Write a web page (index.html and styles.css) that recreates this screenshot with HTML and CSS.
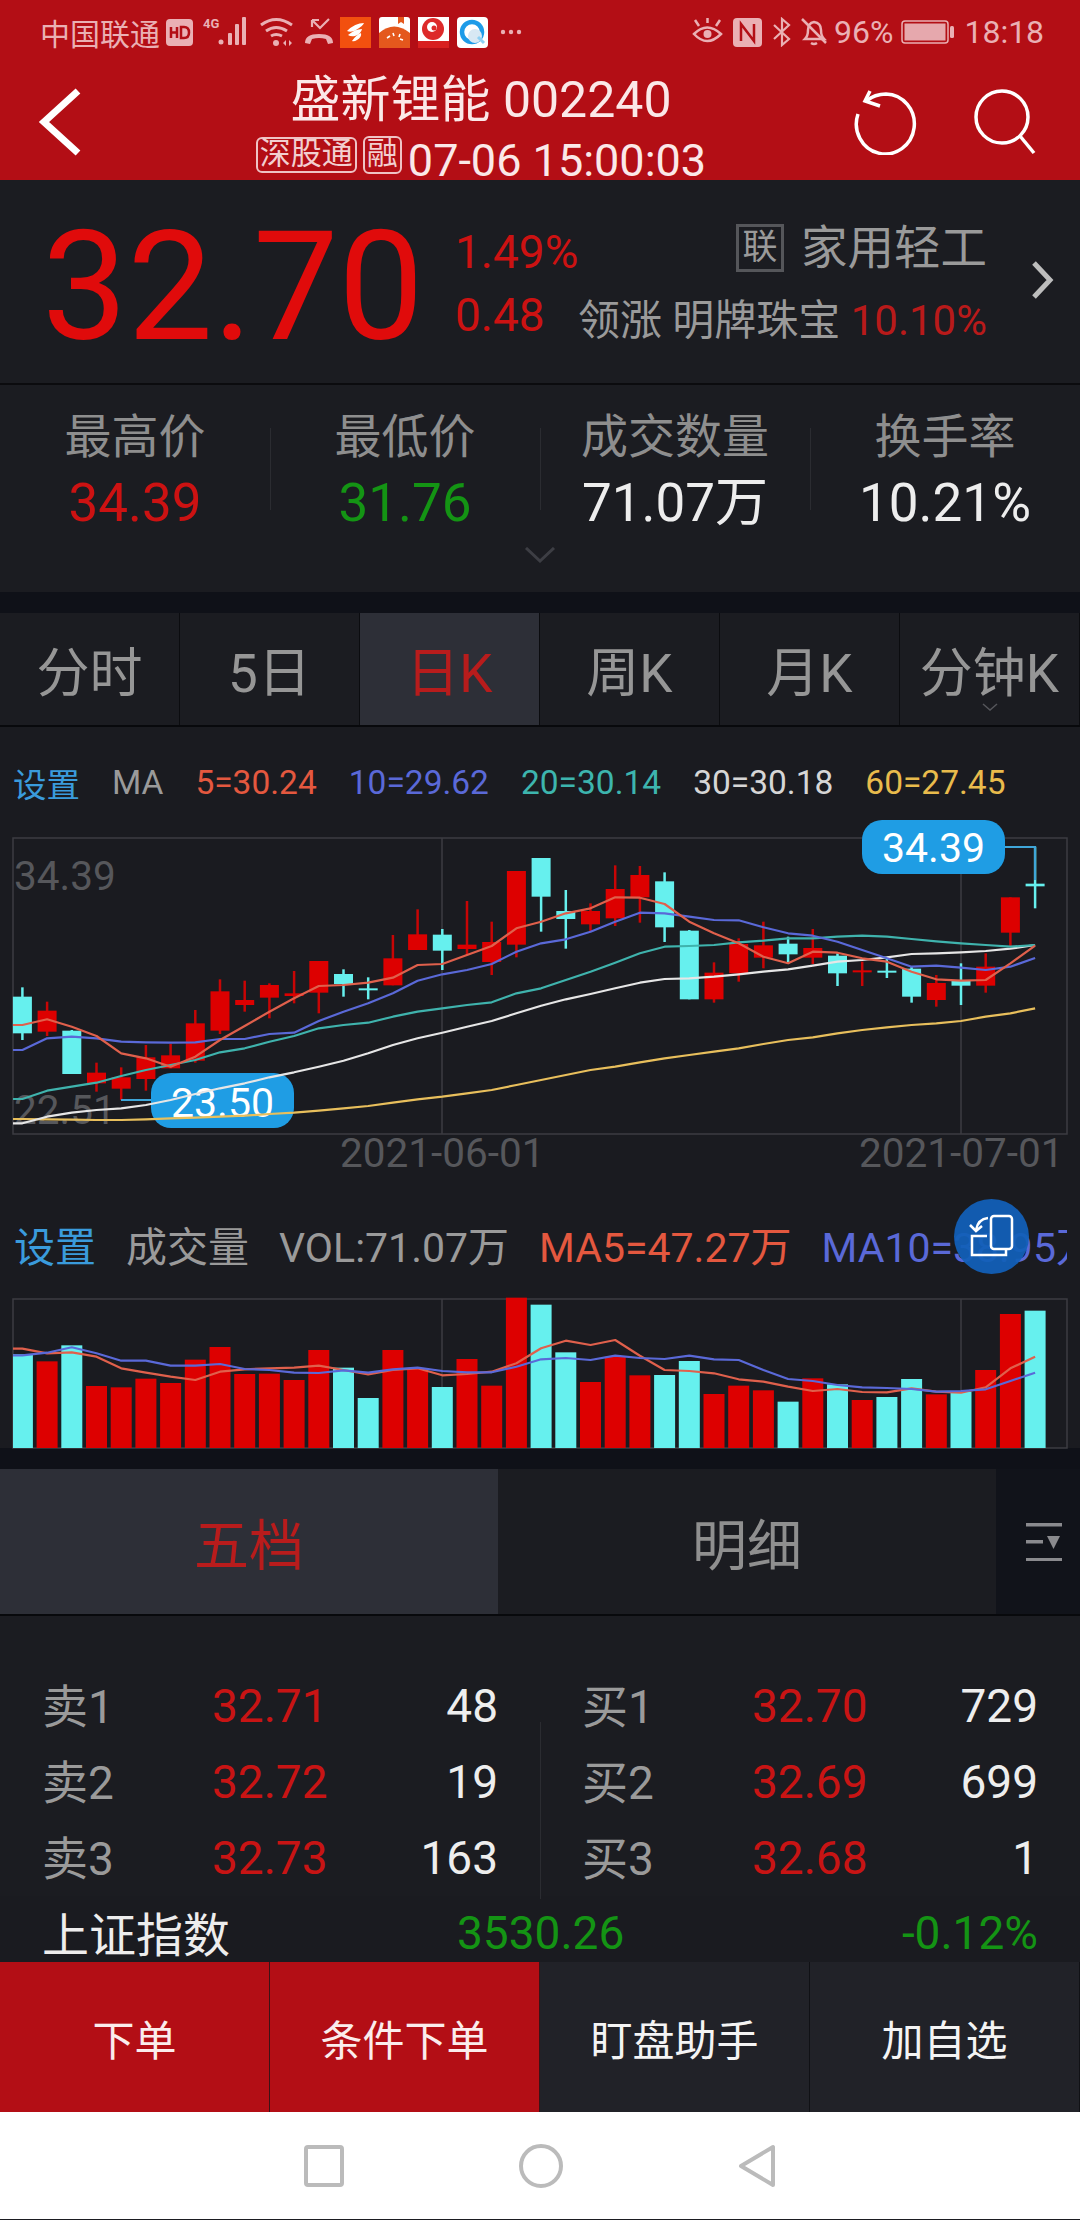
FILE: index.html
```html
<!DOCTYPE html>
<html lang="zh-CN">
<head>
  <meta charset="UTF-8" />
  <meta name="viewport" content="width=device-width, initial-scale=1.0" />
  <title>盛新锂能 002240</title>
  <link rel="stylesheet" href="styles.css">
</head>
<body>
  <header class="topbar">
    <div class="status">
      <span class="carrier">中国联通</span>
      <svg class="ico-hd" width="27" height="27" viewBox="0 0 27 27"><rect width="27" height="27" rx="4" fill="#eab0b4"/><path d="M5 8v11M5 13.500h6M11 8v11M15 8v11h3q5 0 5-5.500T18 8z" fill="none" stroke="#b30e15" stroke-width="2.500"/></svg>
      <svg class="ico-signal" width="50" height="30" viewBox="0 0 50 30"><text x="0" y="12" class="tiny">4G</text><g fill="#eab0b4"><circle cx="18" cy="26" r="2.500"/><rect x="25" y="17" width="4" height="12" rx="1"/><rect x="32" y="8" width="4" height="21" rx="1"/><rect x="39" y="1" width="4" height="28" rx="1"/></g></svg>
      <svg class="ico-wifi" width="36" height="30" viewBox="0 0 36 30"><g fill="none" stroke="#eab0b4" stroke-width="3"><path d="M2 8q15-11 31 0"/><path d="M7 14q10-7 21 0"/><path d="M12 19q5-3 11 0"/></g><circle cx="17" cy="26" r="3" fill="#eab0b4"/><path d="M24 26l3-3v6zM33 26l-3-3v6z" fill="#eab0b4"/></svg>
      <svg class="ico-missed" width="30" height="30" viewBox="0 0 30 30"><path d="M8 3l8 8 9-9M8 3h7M8 3v7" fill="none" stroke="#eab0b4" stroke-width="2.200"/><path d="M1 26q0-9 14-9t14 9l-5 1-2-5q-7-2-14 0l-2 5z" fill="#eab0b4"/></svg>
      <div class="apps">
        <svg width="31" height="31" viewBox="0 0 31 31"><rect width="31" height="31" fill="#f2500f"/><path d="M7 14q8-8 17-8-1 3-8 7-5 3-9 1zM8 18q7-6 14-6-1 5-7 7-4 1-7-1zM12 24q4-6 9-8 1 4-4 7-3 2-5 1z" fill="#fff"/></svg>
        <svg width="31" height="31" viewBox="0 0 31 31"><rect width="31" height="31" rx="3" fill="#fff"/><path d="M0 16q15-13 31 0v15H0z" fill="#e4581d"/><path d="M19 0h6v7l-3-2-3 2z" fill="#e4581d"/><path d="M8 21l3-2M14 16l1 3M21 17l-1 3M24 23l-3-1" stroke="#fff" stroke-width="1.600"/></svg>
        <svg width="31" height="31" viewBox="0 0 31 31"><rect width="31" height="31" fill="#fff"/><circle cx="15" cy="12" r="11" fill="#dd2a2a"/><circle cx="14" cy="10" r="5" fill="#fff"/><circle cx="16" cy="11" r="2.500" fill="#dd2a2a"/><rect y="24" width="31" height="7" fill="#d81f1f"/></svg>
        <svg width="31" height="31" viewBox="0 0 31 31"><rect width="31" height="31" rx="4" fill="#fff"/><circle cx="15" cy="15" r="10" fill="none" stroke="#1e9be8" stroke-width="4.500"/><circle cx="18" cy="19" r="7" fill="#d8e8f4"/><path d="M21 20l6 6" stroke="#8ed0f4" stroke-width="3"/></svg>
      </div>
      <svg class="ico-dots" width="22" height="6" viewBox="0 0 22 6"><g fill="#eab0b4"><circle cx="3" cy="3" r="2.200"/><circle cx="11" cy="3" r="2.200"/><circle cx="19" cy="3" r="2.200"/></g></svg>

      <svg class="ico-eye" width="31" height="28" viewBox="0 0 31 28"><g fill="none" stroke="#eab0b4" stroke-width="2.500"><path d="M2 16q13-13 27 0-14 14-27 0z"/><path d="M3 2l4 6M28 2l-4 6M15.500 0v5"/></g><circle cx="15.500" cy="16" r="4" fill="#eab0b4"/></svg>
      <svg class="ico-nfc" width="29" height="29" viewBox="0 0 29 29"><rect width="29" height="29" rx="4" fill="#eab0b4"/><path d="M8 23V6l13 17V6" fill="none" stroke="#b30e15" stroke-width="2.500"/></svg>
      <svg class="ico-bt" width="20" height="30" viewBox="0 0 20 30"><path d="M2 8l15 14-7 6V2l7 6L2 22" fill="none" stroke="#eab0b4" stroke-width="2.200"/></svg>
      <svg class="ico-bell" width="26" height="30" viewBox="0 0 26 30"><path d="M4 22q3-3 3-9 0-7 6-8 7 1 7 8 0 6 3 9zM10 26q3 2 6 0" fill="none" stroke="#eab0b4" stroke-width="2.500"/><path d="M1 2l24 24" stroke="#eab0b4" stroke-width="2.500"/></svg>
      <span class="batt-pct">96%</span>
      <svg class="ico-batt" width="53" height="24" viewBox="0 0 53 24"><rect x="1" y="1" width="46" height="22" rx="3" fill="none" stroke="#eab0b4" stroke-width="1.500"/><rect x="3.500" y="3.500" width="41" height="17" fill="#e6a8ad"/><rect x="49" y="6" width="4" height="12" rx="1.500" fill="#eab0b4"/></svg>
      <span class="clock">18:18</span>
    </div>
    <div class="nav">
      <svg class="back" width="46" height="72" viewBox="0 0 46 72"><path d="M40 5L6 36l34 31" fill="none" stroke="#fff" stroke-width="7"/></svg>
      <div class="title-box">
        <div class="title">盛新锂能 002240</div>
        <div class="subtitle">
          <span class="tag">深股通</span><span class="tag tag-tall">融</span><span class="time">07-06 15:00:03</span>
        </div>
      </div>
      <div class="actions">
        <svg width="64" height="66" viewBox="854 88 64 66"><path d="M866 100q9-7 20-7a29 30 0 1 1-28 20" fill="none" stroke="#fff" stroke-width="3.500"/><path d="M870 90l-5 10 15 5" fill="none" stroke="#fff" stroke-width="3.500"/></svg>
        <svg width="66" height="66" viewBox="971 88 66 66"><circle cx="1002" cy="116" r="26" fill="none" stroke="#fff" stroke-width="3.500"/><path d="M1020 135l14 17" stroke="#fff" stroke-width="3.500"/></svg>
      </div>
    </div>
  </header>

  <section class="quote">
    <div class="price">32.70</div>
    <div class="change">
      <div>1.49%</div>
      <div>0.48</div>
    </div>
    <div class="sector">
      <div class="sector-name"><span class="lian">联</span>家用轻工</div>
      <div class="sector-lead">领涨 明牌珠宝 <em>10.10%</em></div>
    </div>
    <svg class="more" width="26" height="40" viewBox="0 0 26 40"><path d="M5 3l16 17L5 37" fill="none" stroke="#bdbdbd" stroke-width="5"/></svg>
  </section>

  <section class="stats">
    <div class="stat-grid">
      <div class="stat"><span>最高价</span><b class="red">34.39</b></div>
      <div class="stat"><span>最低价</span><b class="green">31.76</b></div>
      <div class="stat"><span>成交数量</span><b>71.07万</b></div>
      <div class="stat"><span>换手率</span><b>10.21%</b></div>
    </div>
    <svg class="fold" width="32" height="16" viewBox="0 0 32 16"><path d="M2 1l14 13L30 1" fill="none" stroke="#3d3e44" stroke-width="3"/></svg>
  </section>

  <div class="band"></div>

  <nav class="tabs">
    <a>分时</a>
    <a>5日</a>
    <a class="on">日K</a>
    <a>周K</a>
    <a>月K</a>
    <a class="min">分钟K<svg width="16" height="8" viewBox="0 0 16 8"><path d="M1 1l7 6 7-6" fill="none" stroke="#55565b" stroke-width="1.500"/></svg></a>
  </nav>

  <section class="charts">
    <div class="ma-row">
      <span class="blue-link">设置</span>
      <span class="grey">MA</span>
      <span class="c5">5=30.24</span>
      <span class="c10">10=29.62</span>
      <span class="c20">20=30.14</span>
      <span class="c30">30=30.18</span>
      <span class="c60">60=27.45</span>
    </div>

    <svg class="kchart" width="1080" height="337" viewBox="0 838 1080 337">
      <rect class="frame" x="13" y="838" width="1054" height="296"/>
      <path class="grid" d="M442 838V1134M961 838V1134"/>
      <text class="axis" x="14" y="890">34.39</text>
      <text class="axis" x="14" y="1124">22.51</text>
      <text class="axis" x="340" y="1167">2021-06-01</text>
      <text class="axis" x="859" y="1167">2021-07-01</text>
      <g id="kBars"></g>
      <path class="leader" d="M121 1100H151"/>
      <rect class="bubble" x="151" y="1073" width="143" height="55" rx="20"/>
      <text class="bubble-text" x="222.500" y="1117">23.50</text>
      <g id="kLines"></g>
      <path class="leader" d="M1005 847H1035V880"/>
      <rect class="bubble" x="862" y="820" width="143" height="54" rx="20"/>
      <text class="bubble-text" x="933.500" y="862">34.39</text>
    </svg>

    <div class="vol-row">
      <span class="blue-link">设置</span>
      <span class="grey">成交量</span>
      <span class="grey">VOL:71.07万</span>
      <span class="c5">MA5=47.27万</span>
      <span class="c10">MA10=38.95万</span>
      <div class="rotate-btn">
        <svg width="75" height="75" viewBox="0 0 75 75"><g fill="none" stroke="#fff" stroke-width="2.500"><rect x="37" y="17" width="21" height="33" rx="3"/><path d="M33 37H18V56H52V51"/><path d="M34 19q-10 1-12 12"/><path d="M16 26l6 6 6-5"/></g></svg>
      </div>
    </div>

    <svg class="vchart" width="1080" height="149" viewBox="0 1299 1080 149">
      <rect class="frame" x="13" y="1299" width="1054" height="149"/>
      <path class="grid" d="M442 1299V1448M961 1299V1448"/>
      <g id="vBars"></g>
      <g id="vLines"></g>
    </svg>
  </section>

  <div class="band"></div>

  <nav class="book-tabs">
    <a class="on">五档</a>
    <a>明细</a>
    <div class="book-menu">
      <svg width="36" height="38" viewBox="0 0 36 38"><g fill="#8a8a8e"><rect y="0" width="36" height="3.500"/><rect y="17" width="17" height="3.500"/><rect y="35" width="36" height="3.500"/><path d="M21 13h13l-6.500 13z"/></g></svg>
    </div>
  </nav>

  <section class="depth">
    <div class="book">
      <div class="book-row"><span>卖1</span><span class="red">32.71</span><span class="qty">48</span></div>
      <div class="book-row"><span>卖2</span><span class="red">32.72</span><span class="qty">19</span></div>
      <div class="book-row"><span>卖3</span><span class="red">32.73</span><span class="qty">163</span></div>
    </div>
    <div class="book">
      <div class="book-row"><span>买1</span><span class="red">32.70</span><span class="qty">729</span></div>
      <div class="book-row"><span>买2</span><span class="red">32.69</span><span class="qty">699</span></div>
      <div class="book-row"><span>买3</span><span class="red">32.68</span><span class="qty">1</span></div>
    </div>
  </section>
  <div class="index-row">
    <span class="index-name">上证指数</span>
    <span class="green index-val">3530.26</span>
    <span class="green index-pct">-0.12%</span>
  </div>

  <div class="actions-bar">
    <a class="primary">下单</a>
    <a class="primary">条件下单</a>
    <a>盯盘助手</a>
    <a>加自选</a>
  </div>

  <footer class="sysnav">
    <svg width="40" height="42" viewBox="0 0 40 42"><rect x="2" y="2" width="36" height="38" rx="2" fill="none" stroke="#bbb" stroke-width="4"/></svg>
    <svg width="44" height="44" viewBox="0 0 44 44"><circle cx="22" cy="22" r="20" fill="none" stroke="#bbb" stroke-width="4"/></svg>
    <svg width="38" height="44" viewBox="0 0 38 44"><path d="M35 3v38L3 22z" fill="none" stroke="#bbb" stroke-width="4" stroke-linejoin="round"/></svg>
  </footer>

  <script src="chart.js"></script>
</body>
</html>
```

FILE: styles.css
```css
* {
  margin: 0;
  padding: 0;
  box-sizing: border-box;
}
body {
  width: 1080px;
  height: 2220px;
  overflow: hidden;
  background: #1b1c21;
  font-family: Roboto, "Noto Sans CJK SC", sans-serif;
  color: #ededed;
}
.red { color: #cc1212; }
.green { color: #149414; }

/* top red bar */
.topbar {
  height: 180px;
  background: #b30e15;
}
.status {
  height: 64px;
  display: flex;
  align-items: center;
  padding-left: 40px;
  color: #eab0b4;
  font-size: 32px;
}
.carrier { font-size: 30px; width: 126px; }
.ico-signal { margin-left: 10px; margin-top: -2px; }
.ico-wifi { margin-left: 6px; }
.ico-missed { margin-left: 9px; }
.tiny { font-size: 13px; font-weight: 700; fill: #eab0b4; }
.apps {
  display: flex;
  gap: 8px;
  margin-left: 6px;
}
.ico-dots { margin-left: 12px; margin-right: 170px; }
.ico-nfc { margin-left: 10px; }
.ico-bt { margin-left: 10px; }
.ico-bell { margin-left: 9px; }
.batt-pct { margin-left: 7px; }
.ico-batt { margin-left: 8px; }
.clock { margin-left: 10px; }

.nav {
  height: 116px;
  display: grid;
  grid-template-columns: 130px 702px 1fr;
  align-items: center;
}
.back { margin-left: 38px; }
.title-box {
  display: flex;
  flex-direction: column;
  align-items: center;
  height: 116px;
  padding-top: 8px;
  color: #fbe8e8;
}
.title {
  font-size: 50px;
  line-height: 56px;
  white-space: nowrap;
}
.subtitle {
  display: flex;
  align-items: center;
  gap: 6px;
  margin-top: 5px;
  height: 44px;
}
.tag {
  height: 36px;
  padding: 0 2px;
  border: 2px solid #efc3c5;
  border-radius: 6px;
  font-size: 31px;
  line-height: 30px;
  color: #f2cfd0;
}
.tag-tall { height: 38px; padding: 0 2px; line-height: 32px; }
.time { margin-top: 12px; font-size: 45px; line-height: 44px; white-space: nowrap; }
.actions {
  display: flex;
  gap: 53px;
  padding-left: 22px;
}

/* price panel */
.quote {
  height: 205px;
  display: flex;
  border-bottom: 2px solid #0b0b0e;
}
.price {
  flex: none;
  width: 455px;
  padding-left: 42px;
  font-size: 152px;
  line-height: 214px;
  color: #e00b0b;
}
.change {
  flex: none;
  width: 123px;
  padding-top: 41px;
  font-size: 46px;
  line-height: 63px;
  color: #cc1212;
}
.sector {
  flex: none;
  width: 409px;
  display: flex;
  flex-direction: column;
  align-items: flex-end;
  padding-top: 44px;
  color: #9a9a9a;
}
.sector-name {
  display: flex;
  align-items: center;
  font-size: 46.500px;
  line-height: 48px;
}
.lian {
  width: 48px;
  height: 48px;
  margin-right: 17px;
  border: 3px solid #55565a;
  font-size: 35px;
  line-height: 42px;
  text-align: center;
}
.sector-lead {
  margin-top: 25px;
  font-size: 42px;
  line-height: 48px;
  white-space: nowrap;
}
.sector-lead em {
  font-style: normal;
  color: #b81a1a;
}
.more { flex: none; margin: 80px 0 0 42px; }

/* high / low strip */
.stats {
  height: 207px;
  display: flex;
  flex-direction: column;
  align-items: center;
  padding-top: 22px;
}
.stat-grid {
  width: 100%;
  height: 128px;
  display: grid;
  grid-template-columns: repeat(4, 270px);
}
.stat {
  position: relative;
  display: flex;
  flex-direction: column;
  align-items: center;
}
.stat + .stat::before {
  content: "";
  position: absolute;
  left: 0;
  top: 21px;
  height: 82px;
  border-left: 1px solid #2b2c31;
}
.stat span {
  font-size: 47px;
  line-height: 60px;
  color: #8e8e8e;
  white-space: nowrap;
}
.stat b {
  margin-top: 3px;
  font-size: 53px;
  font-weight: 400;
  line-height: 66px;
  white-space: nowrap;
}
.fold { margin-top: 12px; }

.band {
  height: 21px;
  background: #0f1118;
}

/* chart period tabs */
.tabs {
  height: 114px;
  display: grid;
  grid-template-columns: repeat(6, 180px);
  border-bottom: 2px solid #08090c;
}
.tabs a {
  position: relative;
  display: flex;
  align-items: center;
  justify-content: center;
  border-right: 1px solid #0b0c0f;
  font-size: 53px;
  color: #969696;
  white-space: nowrap;
}
.tabs a.on {
  background: #2d2f37;
  color: #b81c1c;
}
.tabs .min svg {
  position: absolute;
  left: 82px;
  bottom: 14px;
}

.charts {
  height: 721px;
  background: #1a1b20;
}
.ma-row {
  height: 111px;
  display: flex;
  align-items: center;
  gap: 32px;
  padding-left: 13px;
  font-size: 33.500px;
  white-space: nowrap;
}
.blue-link { color: #3a9bdc; }
.grey { color: #9a9a9a; }
.c5 { color: #e4583f; }
.c10 { color: #5a69d8; }
.c20 { color: #3db5ae; }
.c30 { color: #d6d6d6; }
.c60 { color: #e9bb4c; }

.kchart, .vchart {
  display: block;
  overflow: visible;
}
.frame { fill: none; stroke: #3c3d42; stroke-width: 1.500; }
.grid { fill: none; stroke: #3c3d42; stroke-width: 1.500; }
.axis { font-size: 40.500px; fill: #56575b; }
.bubble { fill: #1f9de4; }
.bubble-text { font-size: 41px; fill: #fff; text-anchor: middle; }
.leader { fill: none; stroke: #3fa6d8; stroke-width: 2; }

.up { fill: #dd0000; }
.down { fill: #66f0ee; }
.wick-up { stroke: #c80505; stroke-width: 2.500; }
.wick-down { stroke: #66f0ee; stroke-width: 2.500; }
.ma { fill: none; stroke-width: 2.200; stroke-linejoin: round; }
.l5 { stroke: #e0604c; }
.l10 { stroke: #5a69d8; }
.l20 { stroke: #3fb3ad; }
.l30 { stroke: #e6e6e6; }
.l60 { stroke: #e8bf5c; }

.vol-row {
  position: relative;
  width: 1067px;
  height: 124px;
  display: flex;
  align-items: center;
  gap: 30px;
  padding: 14px 0 0 14px;
  overflow: hidden;
  font-size: 41px;
  white-space: nowrap;
}
.rotate-btn {
  position: absolute;
  left: 954px;
  top: 24px;
  width: 75px;
  height: 75px;
  border-radius: 50%;
  background: rgba(18, 96, 184, 0.94);
}

/* five levels / detail tabs */
.book-tabs {
  height: 147px;
  display: grid;
  grid-template-columns: 498px 498px 84px;
  border-bottom: 2px solid #08090c;
  background: #11131a;
}
.book-tabs a {
  display: flex;
  align-items: center;
  justify-content: center;
  padding-bottom: 2px;
  font-size: 55px;
  color: #8f8f8f;
  background: #1b1c21;
}
.book-tabs a.on {
  background: #2d2f37;
  color: #b81c1c;
}
.book-menu {
  display: flex;
  align-items: center;
  justify-content: center;
  padding-left: 12px;
}

.depth {
  position: relative;
  height: 280px;
  display: grid;
  grid-template-columns: 540px 540px;
  padding-top: 52px;
}
.depth::before {
  content: "";
  position: absolute;
  left: 540px;
  top: 106px;
  height: 177px;
  border-left: 1px solid #2b2c31;
}
.book-row {
  height: 76px;
  display: grid;
  grid-template-columns: 170px 1fr auto;
  align-items: center;
  padding: 0 42px;
  font-size: 46px;
  color: #9a9a9a;
}
.book-row span:first-child { margin-top: -6px; }
.book-row .red { color: #c81414; }
.book-row .qty { color: #eeeeee; }

.index-row {
  height: 66px;
  display: grid;
  grid-template-columns: 415px 1fr auto;
  align-items: center;
  padding: 4px 42px 0;
  font-size: 46px;
  background: #1a1b20;
}
.index-name { color: #ededed; font-size: 47px; margin-top: -3px; }

.actions-bar {
  height: 150px;
  display: grid;
  grid-template-columns: repeat(4, 270px);
}
.actions-bar a {
  display: flex;
  align-items: center;
  justify-content: center;
  border-right: 1px solid #101115;
  font-size: 42px;
  color: #f4f4f4;
  background: #212228;
}
.actions-bar a.primary {
  background: #b30e15;
  color: #fbecec;
  border-right-color: #3c1216;
}

.sysnav {
  height: 107px;
  display: flex;
  align-items: center;
  justify-content: center;
  gap: 175px;
  background: #fff;
}
```

FILE: chart.js
```js
// y values are read in thirds of a pixel from the top of each panel
const svgNS = 'http://www.w3.org/2000/svg';
const frameLeft = 13;
const xAt = (i) => 22.4 + 24.7 * i;
const kY = (z) => 740 + z / 3;
const vY = (z) => 1190 + z / 3;

// type, wick top, body top, body bottom, wick bottom
const candles = [
  ['d', 742, 770, 880, 900], ['u', 785, 812, 875, 888], ['d', 870, 872, 1002, 1002],
  ['u', 968, 998, 1030, 1055], ['u', 982, 1012, 1046, 1080], ['u', 915, 952, 1017, 1052],
  ['u', 912, 946, 985, 985], ['u', 810, 850, 962, 968], ['u', 718, 754, 872, 882],
  ['u', 722, 780, 795, 815], ['u', 730, 735, 773, 835], ['u', 693, 760, 768, 790],
  ['u', 663, 663, 758, 820], ['d', 688, 702, 732, 770], ['d', 712, 745, 748, 778],
  ['u', 585, 655, 736, 736], ['u', 508, 583, 630, 630], ['d', 567, 584, 632, 690],
  ['u', 483, 614, 627, 645], ['u', 545, 606, 666, 705], ['u', 393, 393, 614, 652],
  ['d', 354, 354, 470, 575], ['d', 450, 513, 537, 626], ['u', 490, 513, 553, 575],
  ['u', 376, 447, 535, 558], ['u', 378, 405, 472, 548], ['d', 397, 424, 562, 606],
  ['d', 570, 572, 778, 778], ['u', 667, 698, 778, 788], ['u', 595, 612, 700, 725],
  ['u', 545, 616, 653, 685], ['d', 590, 611, 643, 672], ['u', 567, 624, 653, 672],
  ['d', 640, 647, 700, 738], ['u', 665, 691, 696, 738], ['d', 650, 692, 696, 714],
  ['d', 680, 686, 770, 788], ['u', 705, 729, 780, 800], ['d', 670, 720, 737, 795],
  ['u', 640, 680, 737, 758], ['u', 472, 472, 578, 620], ['d', 320, 431, 439, 505]
];

const kLines = {
  l60: [1137, 1138, 1139, 1140, 1140, 1138, 1135, 1133, 1130, 1127, 1122, 1118, 1112, 1105, 1098, 1088, 1078, 1070, 1060, 1050, 1035, 1020, 1005, 990, 980, 967, 955, 945, 935, 925, 912, 900, 892, 880, 870, 862, 855, 850, 843, 830, 820, 805],
  l30: [1150, 1130, 1118, 1110, 1105, 1095, 1080, 1062, 1045, 1030, 1012, 997, 980, 962, 940, 915, 895, 878, 860, 843, 820, 797, 778, 762, 745, 728, 717, 715, 710, 703, 695, 688, 677, 665, 660, 652, 642, 640, 637, 633, 626, 615],
  l20: [1077, 1052, 1040, 1028, 1008, 990, 975, 960, 937, 925, 905, 888, 865, 855, 848, 830, 815, 805, 795, 787, 760, 745, 720, 695, 668, 640, 620, 618, 615, 607, 602, 595, 595, 590, 587, 590, 597, 604, 610, 615, 620, 615],
  l10: [930, 895, 890, 895, 905, 907, 908, 907, 897, 897, 882, 878, 843, 815, 790, 760, 722, 703, 690, 672, 635, 610, 598, 575, 545, 518, 520, 530, 540, 541, 562, 580, 587, 605, 630, 655, 680, 677, 683, 690, 680, 654],
  l5: [855, 838, 860, 888, 940, 955, 980, 950, 900, 858, 815, 775, 738, 735, 728, 713, 675, 672, 645, 618, 565, 545, 520, 505, 472, 473, 492, 545, 580, 610, 650, 670, 635, 638, 655, 665, 695, 718, 722, 720, 670, 617]
};

// d = cyan bar, u = red bar
const volumes = [
  ['d', 493], ['u', 514], ['d', 466], ['u', 588], ['u', 592], ['u', 566], ['u', 579],
  ['u', 509], ['u', 471], ['u', 552], ['u', 551], ['u', 570], ['u', 480], ['d', 533],
  ['d', 624], ['u', 480], ['u', 535], ['d', 591], ['u', 507], ['u', 587], ['u', 323],
  ['d', 344], ['d', 487], ['u', 576], ['u', 500], ['u', 556], ['d', 555], ['d', 513],
  ['u', 612], ['u', 587], ['u', 601], ['d', 635], ['u', 565], ['d', 583], ['u', 630],
  ['d', 621], ['d', 567], ['u', 613], ['d', 605], ['u', 540], ['u', 372], ['d', 362]
];

const vLines = {
  l5: [476, 490, 487, 500, 535, 548, 560, 570, 545, 538, 535, 533, 527, 540, 553, 540, 535, 556, 552, 545, 520, 475, 452, 465, 450, 497, 540, 543, 550, 568, 575, 590, 603, 597, 606, 607, 595, 605, 608, 592, 535, 500],
  l10: [496, 488, 472, 490, 512, 512, 527, 527, 522, 537, 540, 548, 549, 541, 548, 538, 533, 543, 547, 547, 530, 508, 504, 510, 497, 504, 507, 497, 508, 510, 540, 567, 573, 585, 592, 594, 597, 605, 603, 598, 573, 548]
};

function add(parent, tag, attrs) {
  const el = document.createElementNS(svgNS, tag);
  Object.keys(attrs).forEach((k) => el.setAttribute(k, attrs[k]));
  parent.appendChild(el);
}

function drawLines(parent, lines, toY) {
  Object.keys(lines).forEach((name) => {
    const points = lines[name].map((z, i) => xAt(i).toFixed(1) + ',' + toY(z).toFixed(1));
    // the averages run on from the left edge of the frame
    points.unshift(frameLeft + ',' + toY(lines[name][0]).toFixed(1));
    add(parent, 'polyline', { class: 'ma ' + name, points: points.join(' ') });
  });
}

const kBars = document.getElementById('kBars');
candles.forEach(([type, wickTop, top, bottom, wickBottom], i) => {
  const x = xAt(i);
  add(kBars, 'line', {
    class: type === 'u' ? 'wick-up' : 'wick-down',
    x1: x, x2: x, y1: kY(wickTop), y2: kY(wickBottom)
  });
  add(kBars, 'rect', {
    class: type === 'u' ? 'up' : 'down',
    x: x - 9.5, width: 19, y: kY(top), height: Math.max(kY(bottom) - kY(top), 2)
  });
});
drawLines(document.getElementById('kLines'), kLines, kY);

const vBars = document.getElementById('vBars');
volumes.forEach(([type, top], i) => {
  const left = Math.max(xAt(i) - 10.5, frameLeft);
  add(vBars, 'rect', {
    class: type === 'u' ? 'up' : 'down',
    x: left, width: xAt(i) + 10.5 - left, y: vY(top), height: 1448 - vY(top)
  });
});
drawLines(document.getElementById('vLines'), vLines, vY);
```
